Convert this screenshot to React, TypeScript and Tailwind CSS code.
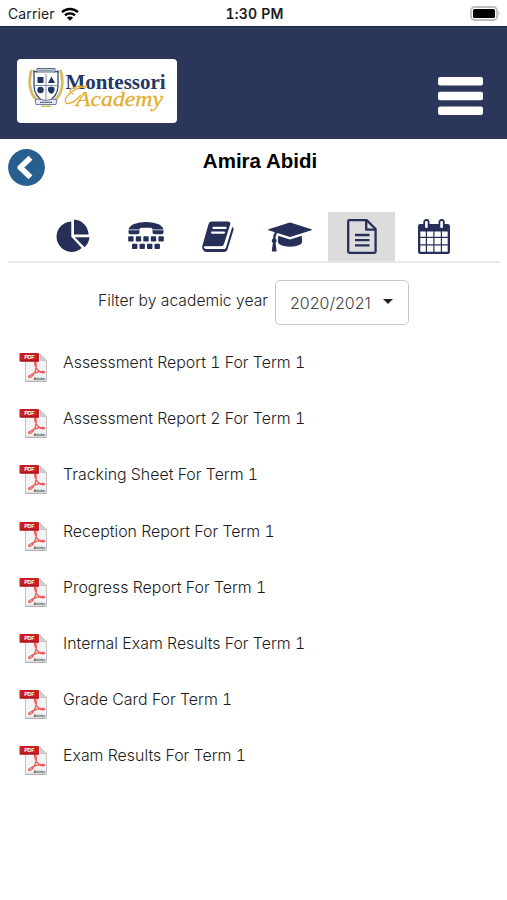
const reports = [
  "Assessment Report 1 For Term 1",
  "Assessment Report 2 For Term 1",
  "Tracking Sheet For Term 1",
  "Reception Report For Term 1",
  "Progress Report For Term 1",
  "Internal Exam Results For Term 1",
  "Grade Card For Term 1",
  "Exam Results For Term 1",
];

const StatusBar = () => {
  return (
    <div className="grid grid-cols-3 items-center h-[26px] pl-[8px] pr-[6px] pt-px font-['Inter',sans-serif] text-[#1c1c1c]">
      <div className="flex items-center gap-[6px]">
        <span className="text-[14px] tracking-[0.1px]">Carrier</span>
        <svg className="w-[18px] h-[14px]" viewBox="0 0 18 14" fill="none" stroke="#000" strokeWidth="2.4">
          <path d="M1 5.2a11.5 11.5 0 0 1 16 0" />
          <path d="M4 8.4a7.2 7.2 0 0 1 10 0" />
          <path d="M9 13.8L5.9 10.7a4.4 4.4 0 0 1 6.2 0z" fill="#000" stroke="none" />
        </svg>
      </div>
      <span className="text-center text-[14px] font-semibold tracking-[0.2px] tabular-nums">1:30 PM</span>
      <svg className="w-[31px] h-[15px] justify-self-end" viewBox="0 0 31 15">
        <rect x="1" y="1" width="26" height="13" rx="3.5" fill="#fff" stroke="#bdbdbd" strokeWidth="1.8" />
        <rect x="3" y="3" width="22" height="9" rx="1.5" fill="#000" />
        <path d="M28.5 5q2.5 2.5 0 5z" fill="#bdbdbd" />
      </svg>
    </div>
  );
};

const Crest = () => {
  return (
    <svg className="w-[36px] h-[42px]" viewBox="0 0 36 42">
      <g fill="none" stroke="#d7b866" strokeWidth="2.8">
        <path d="M3.5 3C0 15 1 30 13 35.500" />
        <path d="M32.5 3C36 15 35 30 23 35.500" />
      </g>
      <path d="M6 4Q9 6 12 3h12q3 3 6 1v15q0 11-12 17Q6 30 6 19z" fill="#fff" stroke="#31476f" strokeWidth="1.3" />
      <path d="M18 7v27M7 18.500h22" stroke="#8290a8" strokeWidth="1" />
      <g fill="#1f3664">
        <path d="M9.500 10h6v6h-6zM23.500 9.500l3.600 6.500h-7.200z" />
        <circle cx="12.500" cy="23" r="3.200" />
        <path d="M20 20.500l3.500-1 3 1v3q-.5 2.500-3 3.200-3-.7-3.500-3.200z" />
      </g>
      <path d="M9 1.500h18v3.500H9z" fill="#dfe3eb" stroke="#31476f" strokeWidth=".8" />
      <path d="M10.500 2.700h15v1.200h-15z" fill="#8290a8" />
      <path d="M7 33l4-1q7 3 14 0l4 1-1 4.500H8z" fill="#e6e9ef" stroke="#52658a" strokeWidth=".8" />
      <path d="M12 35.300h12" stroke="#31476f" strokeWidth="1.300" strokeDasharray="1.500 .6" />
      <path d="M13 39.200h10" stroke="#d7b866" strokeWidth="1.500" />
    </svg>
  );
};

const Logo = () => {
  return (
    <div className="relative flex w-[160px] h-[64px] rounded-[4px] bg-white pl-[11px] pt-[8px]">
      <Crest />
      <svg className="absolute left-[46px] top-[8px] w-[112px] h-[50px]" viewBox="0 0 112 50">
        <text x="2.500" y="22" fontFamily="Liberation Serif, serif" fontWeight="700" fontSize="22" fill="#213768" textLength="100" lengthAdjust="spacingAndGlyphs">
          Montessori
        </text>
        <g fill="none" stroke="#e3ae2e" strokeWidth="1.300" strokeLinecap="round">
          <path d="M24 19C15 20 6 25 2.500 32q-1 5 3 4.500 6-1 12-8" />
          <path d="M10 27q-6-3 0-6 6-3 12-1" />
        </g>
        <text x="13" y="38.500" fontFamily="Liberation Serif, serif" fontStyle="italic" fontSize="22" fill="#e3ae2e" stroke="#e3ae2e" strokeWidth=".3" textLength="87" lengthAdjust="spacingAndGlyphs">
          Academy
        </text>
      </svg>
    </div>
  );
};

const Header = () => {
  return (
    <header className="flex items-start justify-between h-[113px] bg-[#2b365b] border-t border-[#1d2850] pl-[17px] pr-[24px] pt-[32px]">
      <Logo />
      <svg className="w-[45px] h-[38px] mt-[18px]" viewBox="0 0 45 38" fill="#fff">
        <rect y="0" width="45" height="8.500" rx="2" />
        <rect y="14.700" width="45" height="8.500" rx="2" />
        <rect y="29.400" width="45" height="8.500" rx="2" />
      </svg>
    </header>
  );
};

const PieIcon = () => (
  <svg className="w-[34px] h-[34px] -translate-x-px -translate-y-px" viewBox="0 0 34 34" fill="#252f58">
    <path d="M15.300 2.500v15.300l10.500 11.300A15.200 15.200 0 1 1 15.300 2.500z" />
    <path d="M18 0.500a15.500 15.500 0 0 1 14.500 15H18z" />
    <path d="M18.800 18.200H33.500q-.5 5.500-4.900 10z" />
  </svg>
);

const TtyIcon = () => (
  <svg className="w-[36px] h-[29px] -translate-y-px" viewBox="0 0 36 29" fill="#252f58">
    <path d="M.5 8.500Q1.500 5 6 3 11.500 1 18 1t12 2q4.500 2 5.500 5.500H24.500Q24.500 6.700 22.500 6.700h-9q-2 0-2 1.800z" />
    <path d="M.5 9.300h11v2q0 1.900-1.900 1.900H2.200Q.5 13.200.5 11.500zM24.500 9.300h11v2.200q0 1.700-1.700 1.700h-7.400q-1.900 0-1.900-1.900z" />
    <g>
      <rect x=".2" y="15.200" width="5.400" height="5.300" rx=".8" />
      <rect x="7.800" y="15.200" width="5.400" height="5.300" rx=".8" />
      <rect x="15.300" y="15.200" width="5.400" height="5.300" rx=".8" />
      <rect x="22.800" y="15.200" width="5.400" height="5.300" rx=".8" />
      <rect x="30.400" y="15.200" width="5.400" height="5.300" rx=".8" />
      <rect x="4" y="22.700" width="5.400" height="5.300" rx=".8" />
      <rect x="11.500" y="22.700" width="5.400" height="5.300" rx=".8" />
      <rect x="19" y="22.700" width="5.400" height="5.300" rx=".8" />
      <rect x="26.500" y="22.700" width="5.400" height="5.300" rx=".8" />
    </g>
  </svg>
);

const BookIcon = () => (
  <svg className="w-[32px] h-[31px]" viewBox="0 0 32 31" fill="none">
    <path d="M9 .5h17q3 .2 2.200 3L22 23q-.7 2.300-3.200 2.300H3.500q-2.300.2-1.500 1.700.6 1 3 1h17.200q1.200 0 1.700-1.200L30.200 6q1.900.9 1.200 3.200l-5.700 18.600Q24.700 31 22 31H4.800Q1.600 31 .3 27.500 0 25 1 22.500L6.500 3.200Q7.400.7 9 .5z" fill="#252f58" />
    <path d="M2.500 25.800h16.800q2.200 0 3-2.200L28.800 4.500l.7 2L23.700 26q-.5 1.600-2 1.600H4.200q-2.200-.2-1.700-1.800z" fill="#fff" />
    <path d="M11.500 6.900h12M10 11.600h12" stroke="#fff" strokeWidth="2.200" strokeLinecap="round" />
  </svg>
);

const CapIcon = () => (
  <svg className="w-[44px] h-[34px]" viewBox="0 0 2304 1792" fill="#252f58">
    <path d="M1774 836l18 316q4 69-82 128t-235 93.500-323 34.500-323-34.500-235-93.500-82-128l18-316 574 181q22 7 48 7t48-7zm530-324q0 23-22 31l-1120 352q-4 1-10 1t-10-1l-652-206q-43 34-71 111.500t-34 178.500q63 36 63 109 0 69-58 107l58 433q2 14-8 25-9 11-24 11h-192q-15 0-24-11-10-11-8-25l58-433q-58-38-58-107 0-73 65-111 11-207 98-330l-333-104q-22-8-22-31t22-31l1120-352q4-1 10-1t10 1l1120 352q22 8 22 31z" />
  </svg>
);

const FileIcon = () => (
  <svg className="w-[30px] h-[35px]" viewBox="0 0 30 35" fill="none" stroke="#252f58" strokeWidth="2.300" strokeLinejoin="round">
    <path d="M2.500 1.200h17.300l8.800 8.800v22.500q0 1.300-1.300 1.300H2.500q-1.300 0-1.300-1.300v-30q0-1.300 1.300-1.300z" />
    <path d="M19.200 1.500v9.200h9.200" />
    <path d="M8 16h14.500M8 21.200h14.500M8 26.400h14.500" />
  </svg>
);

const CalendarIcon = () => (
  <svg className="w-[32px] h-[35px]" viewBox="0 0 32 35">
    <rect x="0" y="5" width="32" height="30" rx="2.300" fill="#252f58" />
    <path d="M2.300 12.500h5.500v5.200H2.300zM9 12.500h6.300v5.200H9zM16.500 12.500h6.300v5.200h-6.300zM24 12.500h5.700v5.200H24zM2.300 19h5.500v6.200H2.300zM9 19h6.300v6.200H9zM16.500 19h6.300v6.200h-6.300zM24 19h5.700v6.200H24zM2.300 26.500h5.500v6.200H2.300zM9 26.500h6.300v6.200H9zM16.500 26.500h6.300v6.200h-6.300zM24 26.500h5.700v6.200H24z" fill="#fff" />
    <g fill="#fff" stroke="#252f58" strokeWidth="1.800">
      <rect x="6.200" y="1" width="4.400" height="9" rx="2" />
      <rect x="21.400" y="1" width="4.400" height="9" rx="2" />
    </g>
  </svg>
);

const tabs = [
  { name: "chart", icon: <PieIcon /> },
  { name: "contact", icon: <TtyIcon /> },
  { name: "book", icon: <BookIcon /> },
  { name: "grades", icon: <CapIcon /> },
  { name: "reports", icon: <FileIcon />, active: true },
  { name: "calendar", icon: <CalendarIcon /> },
];

const PdfIcon = () => (
  <svg className="w-[30px] h-[32px] mt-[2px] shrink-0" viewBox="0 0 30 32">
    <path d="M6.500 2.500h15l6 6v20.500h-21z" fill="#f3f3f3" stroke="#c2c2c2" />
    <path d="M21.500 2.500v6h6z" fill="#d2d2d2" stroke="#b5b5b5" strokeWidth=".6" />
    <path d="M15.500 10.500q.5-1.500 1.500 0 .8 3-.5 8-2.500 6-5.500 7-2.200 0-.8-1.500 5-4 14-4.700 2 .5 1 1.400-3.500.8-7-3.200-2.700-4-2.700-7z" fill="none" stroke="#f05a5a" strokeWidth="1.300" />
    <path d="M6.500 29.500h21" stroke="#a9a9a9" strokeWidth=".8" />
    <rect x=".5" y="1" width="19.500" height="8.500" rx=".8" fill="#c91f24" />
    <path d="M1 8.200h19v1.300H1z" fill="#a31218" />
    <text x="5.200" y="7.300" fontFamily="Liberation Sans, sans-serif" fontWeight="700" fontSize="5.500" fill="#fff" textLength="10.500">
      PDF
    </text>
    <text x="14.500" y="27.800" fontFamily="Liberation Sans, sans-serif" fontWeight="700" fontSize="4.300" fill="#555" textLength="12" lengthAdjust="spacingAndGlyphs">
      Adobe
    </text>
  </svg>
);

const App = () => {
  return (
    <main className="w-full min-h-[900px] bg-white font-['Inter',sans-serif]">
      <StatusBar />
      <Header />
      <section className="grid grid-cols-[37px_1fr_37px] items-start px-[8px] pt-[10px] h-[73px]">
        <svg className="w-[37px] h-[37px]" viewBox="0 0 37 37">
          <circle cx="18.500" cy="18.500" r="18.400" fill="#295f90" />
          <path d="M22.500 8.800L12.300 18.500l10.200 9.700" fill="none" stroke="#fff" strokeWidth="5.600" strokeLinejoin="round" />
        </svg>
        <h1 className="text-center text-[20.500px] leading-[24px] font-bold text-black font-['Liberation_Sans',sans-serif] whitespace-nowrap pl-[13px]">
          Amira Abidi
        </h1>
      </section>
      <nav className="flex ml-[8px] mr-[7px] pl-[32px] h-[51px] border-b-2 border-[#e8e8e8]">
        {tabs.map((tab) => (
          <div
            key={tab.name}
            className={`flex items-center justify-center w-[67px] mr-[5px] h-[49px] ${tab.active ? "bg-[#dcdcdc]" : ""}`}
          >
            {tab.icon}
          </div>
        ))}
      </nav>
      <section className="flex justify-center items-start pt-[17px] gap-[7px] h-[79px]">
        <span className="mt-[8px] text-[15.700px] leading-[26px] font-light text-[#222]">Filter by academic year</span>
        <div className="flex items-center w-[134px] h-[45px] rounded-[5px] border border-[#c8c8c8] pl-[14px] gap-[12px]">
          <span className="text-[16px] font-light text-[#444]">2020/2021</span>
          <div className="border-x-[5px] border-t-[5px] border-x-transparent border-t-[#222] -mt-[3px]" />
        </div>
      </section>
      <section className="flex flex-col pl-[19px] pt-[8px]">
        {reports.map((report) => (
          <article key={report} className="flex items-start gap-[14px] h-[56.200px]">
            <PdfIcon />
            <p className="text-[15.900px] leading-[25px] font-light tabular-nums text-[#1c1c1c]">{report}</p>
          </article>
        ))}
      </section>
    </main>
  );
};

export default App;
